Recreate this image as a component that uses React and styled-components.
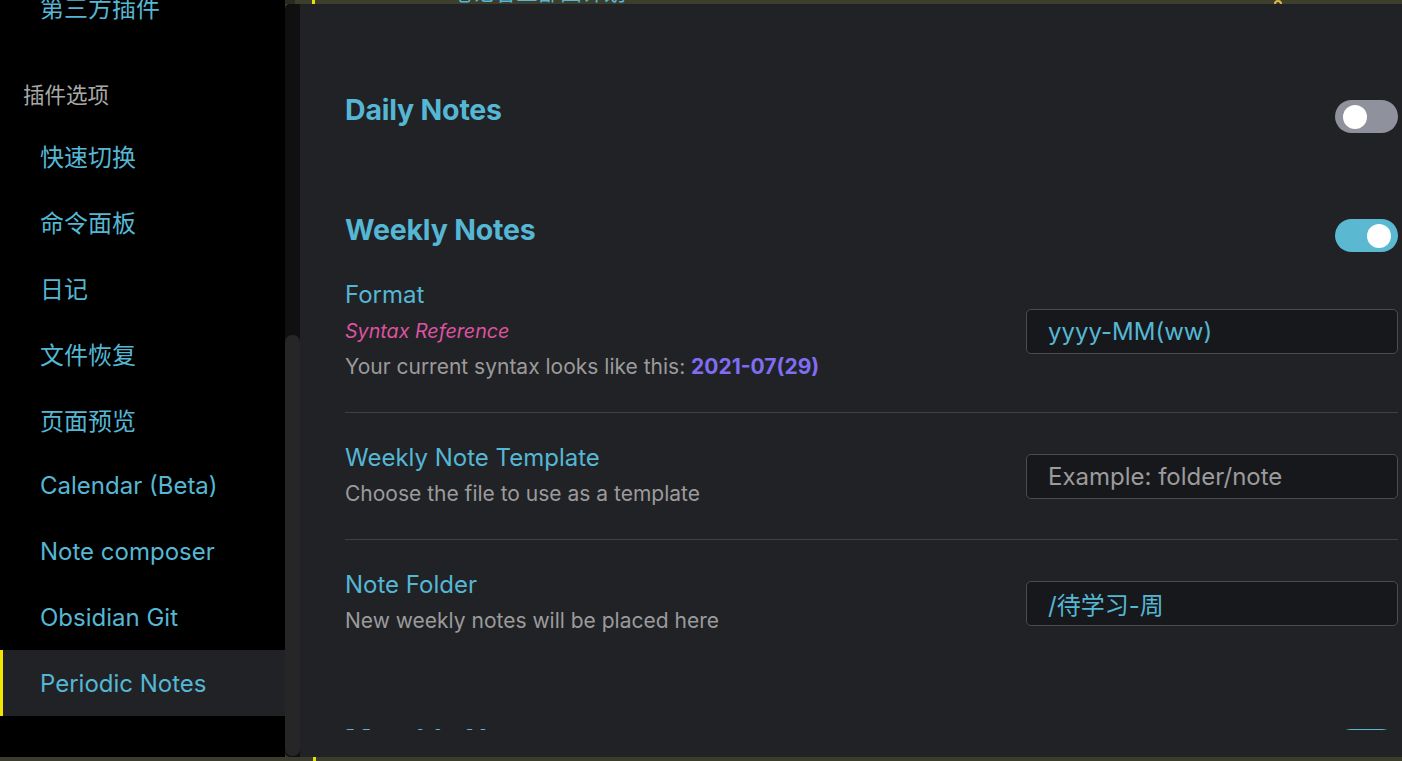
import styled, { createGlobalStyle } from "styled-components";

const Global = createGlobalStyle`
  html, body {
    margin: 0;
    padding: 0;
    background: #3b3c2b;
    overflow: hidden;
  }
  * { box-sizing: border-box; }
`;

const cyan = "#55b7d4";

const Marco = styled.div`
  width: 1402px;
  height: 761px;
  display: grid;
  grid-template-columns: 285px 15px 1fr;
  grid-template-rows: 4px 753px 4px;
  grid-template-areas:
    "side top top"
    "side track main"
    "bottom bottom bottom";
  background: #3b3c2b;
  font-family: Inter, "Noto Sans CJK SC", sans-serif;
  overflow: hidden;
`;

const BarraSup = styled.div`
  grid-area: top;
  display: flex;
  overflow: hidden;
  background: #3d3e2c;

  .sombra { width: 10px; background: #2a2b20; }
  .marca { width: 3px; margin-left: 17px; background: #e8e000; }
  .titulo {
    margin-left: 135px;
    margin-top: -20px;
    font-size: 22px;
    line-height: 24px;
    color: ${cyan};
    white-space: nowrap;
  }
  .flecha {
    margin-left: auto;
    margin-right: 120px;
    width: 8px;
    height: 4px;
    border: 2px solid #d9b84a;
    border-bottom: none;
    border-radius: 4px 4px 0 0;
  }
`;

const BarraInf = styled.div`
  grid-area: bottom;
  display: flex;
  background: #3b3c2b;

  .marca { width: 3px; margin-left: 313px; background: #e8e000; }
`;

const Lateral = styled.nav`
  grid-area: side;
  background: #000;
  overflow: hidden;
  display: flex;
  flex-direction: column;
`;

const Lista = styled.div`
  margin-top: -27px;
  display: flex;
  flex-direction: column;
`;

const Categoria = styled.div`
  height: 83px;
  padding: 44px 0 0 23px;
  font-size: 21.5px;
  line-height: 24px;
  color: #a9a9a9;
`;

const Item = styled.div`
  height: 66px;
  flex-shrink: 0;
  display: flex;
  align-items: center;
  padding-left: ${(p) => (p.$activo ? "37px" : "40px")};
  border-left: ${(p) => (p.$activo ? "3px solid #f2e600" : "none")};
  background: ${(p) => (p.$activo ? "#212226" : "transparent")};
  font-size: 24px;
  color: ${cyan};
  white-space: nowrap;
`;

const Pista = styled.div`
  grid-area: track;
  background: #101010;
  border-radius: 5px 0 0 5px;
  display: flex;
  flex-direction: column;
  justify-content: flex-end;
  padding-bottom: 1px;

  .pulgar {
    height: 421px;
    background: #262626;
    border-radius: 7px;
  }
`;

const Principal = styled.main`
  grid-area: main;
  background: #212226;
  padding-bottom: 27px;
  display: flex;
  flex-direction: column;
`;

const Desplazable = styled.div`
  flex: 1;
  overflow: hidden;
  padding: 89px 4px 0 45px;
`;

const Seccion = styled.div`
  display: flex;
  justify-content: space-between;
  align-items: flex-start;
  margin-top: ${(p) => p.$arriba || 0}px;
`;

const Titulo = styled.h2`
  margin: 0;
  font-size: 28.5px;
  line-height: 34px;
  font-weight: 700;
  letter-spacing: -0.2px;
  color: ${cyan};
`;

const Interruptor = styled.div`
  width: 63px;
  height: 33px;
  margin-top: ${(p) => (p.$on ? 6 : 7)}px;
  border-radius: 17px;
  padding: 0 7px 0 8px;
  display: flex;
  align-items: center;
  justify-content: ${(p) => (p.$on ? "flex-end" : "flex-start")};
  background: ${(p) => (p.$on ? "#5ab8d1" : "#8f919c")};

  span {
    width: 24px;
    height: 24px;
    border-radius: 50%;
    background: #fff;
  }
`;

const Ajuste = styled.div`
  display: flex;
  justify-content: space-between;
  align-items: center;
  padding: 27px 0;
  margin-top: ${(p) => p.$arriba || 0}px;
  border-bottom: ${(p) => (p.$linea ? "1px solid #3f4045" : "none")};
`;

const Info = styled.div`
  display: flex;
  flex-direction: column;

  .nombre {
    font-size: 24px;
    line-height: 36px;
    color: ${cyan};
  }
  .enlace {
    font-size: 19.7px;
    line-height: 36px;
    font-style: italic;
    color: #dd53a0;
  }
  .desc {
    font-size: 21px;
    line-height: 36px;
    color: #9b9b9b;
  }
  .ejemplo {
    font-weight: 700;
    color: #7f6df2;
  }
`;

const Campo = styled.input`
  width: 372px;
  height: 45px;
  padding: 0 0 0 21px;
  border: 1px solid #4b4c50;
  border-radius: 5px;
  background: #17181b;
  font-family: Inter, "Noto Sans CJK SC", sans-serif;
  font-size: 24px;
  color: ${cyan};
  outline: none;

  &::placeholder { color: #9b9b9b; }
`;

const items = [
  "快速切换",
  "命令面板",
  "日记",
  "文件恢复",
  "页面预览",
  "Calendar (Beta)",
  "Note composer",
  "Obsidian Git",
];

export default function App() {
  return (
    <>
      <Global />
      <Marco>
        <Lateral>
          <Lista>
            <Item>第三方插件</Item>
            <Categoria>插件选项</Categoria>
            {items.map((t) => (
              <Item key={t}>{t}</Item>
            ))}
            <Item $activo>Periodic Notes</Item>
          </Lista>
        </Lateral>

        <BarraSup>
          <div className="sombra" />
          <div className="marca" />
          <div className="titulo">笔记者三部曲计划</div>
          <div className="flecha" />
        </BarraSup>

        <Pista>
          <div className="pulgar" />
        </Pista>

        <Principal>
          <Desplazable>
            <Seccion>
              <Titulo>Daily Notes</Titulo>
              <Interruptor><span /></Interruptor>
            </Seccion>

            <Seccion $arriba={80}>
              <Titulo>Weekly Notes</Titulo>
              <Interruptor $on><span /></Interruptor>
            </Seccion>

            <Ajuste $linea $arriba={-2}>
              <Info>
                <div className="nombre">Format</div>
                <div className="enlace">Syntax Reference</div>
                <div className="desc">
                  Your current syntax looks like this: <span className="ejemplo">2021-07(29)</span>
                </div>
              </Info>
              <Campo defaultValue="yyyy-MM(ww)" />
            </Ajuste>

            <Ajuste $linea>
              <Info>
                <div className="nombre">Weekly Note Template</div>
                <div className="desc">Choose the file to use as a template</div>
              </Info>
              <Campo placeholder="Example: folder/note" />
            </Ajuste>

            <Ajuste>
              <Info>
                <div className="nombre">Note Folder</div>
                <div className="desc">New weekly notes will be placed here</div>
              </Info>
              <Campo defaultValue="/待学习-周" />
            </Ajuste>

            <Seccion $arriba={57}>
              <Titulo>Monthly Notes</Titulo>
              <Interruptor $on><span /></Interruptor>
            </Seccion>
          </Desplazable>
        </Principal>

        <BarraInf>
          <div className="marca" />
        </BarraInf>
      </Marco>
    </>
  );
}
